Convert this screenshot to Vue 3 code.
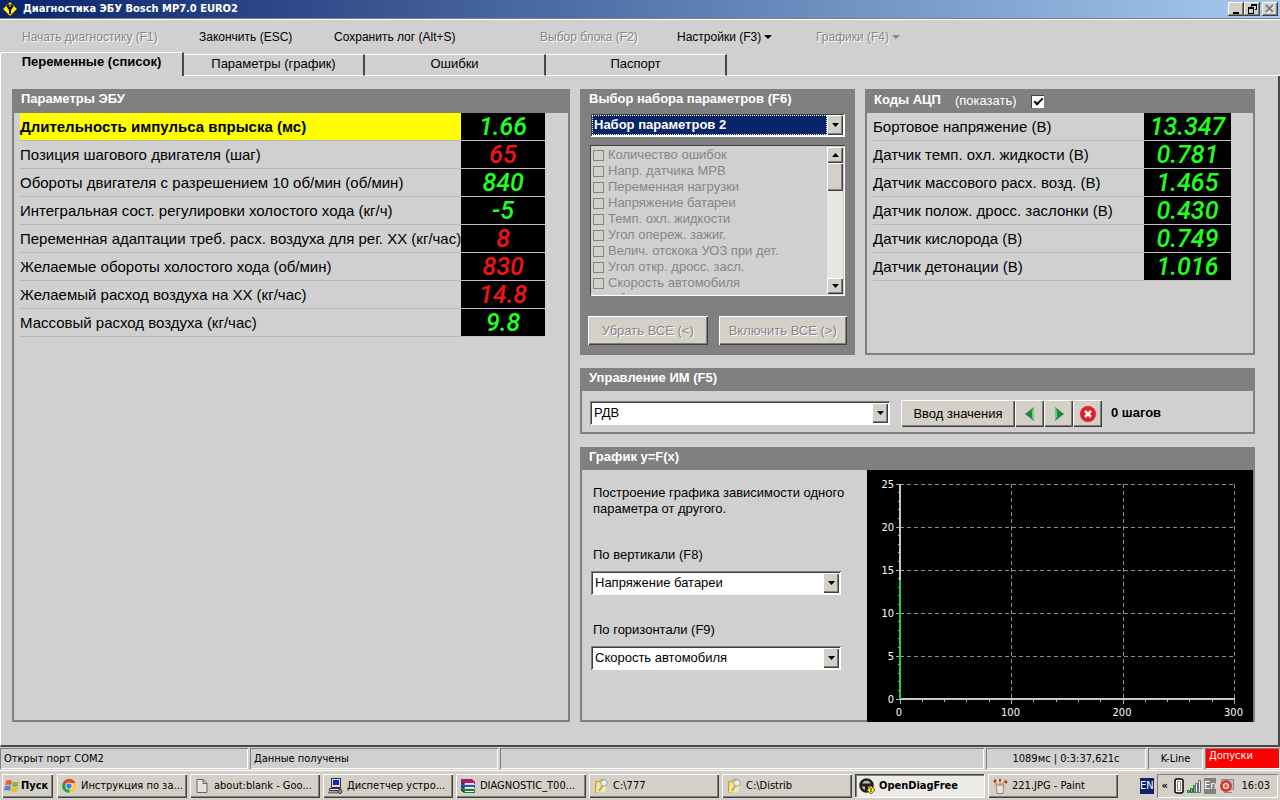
<script setup>
import { ref } from 'vue'

const menu = [
  { text: 'Начать диагностику (F1)', off: true },
  { text: 'Закончить (ESC)' },
  { text: 'Сохранить лог (Alt+S)' },
  { text: 'Выбор блока (F2)', off: true },
  { text: 'Настройки (F3)', arrow: true },
  { text: 'Графики (F4)', off: true, arrow: true },
]
const tabs = ['Переменные (список)', 'Параметры (график)', 'Ошибки', 'Паспорт']
const activeTab = ref(0)

const params = [
  ['Длительность импульса впрыска (мс)', '1.66', 'green'],
  ['Позиция шагового двигателя (шаг)', '65', 'red'],
  ['Обороты двигателя с разрешением 10 об/мин (об/мин)', '840', 'green'],
  ['Интегральная сост. регулировки холостого хода (кг/ч)', '-5', 'green'],
  ['Переменная адаптации треб. расх. воздуха для рег. ХХ (кг/час)', '8', 'red'],
  ['Желаемые обороты холостого хода (об/мин)', '830', 'red'],
  ['Желаемый расход воздуха на ХХ (кг/час)', '14.8', 'red'],
  ['Массовый расход воздуха (кг/час)', '9.8', 'green'],
]
const adc = [
  ['Бортовое напряжение (В)', '13.347'],
  ['Датчик темп. охл. жидкости (В)', '0.781'],
  ['Датчик массового расх. возд. (В)', '1.465'],
  ['Датчик полож. дросс. заслонки (В)', '0.430'],
  ['Датчик кислорода (В)', '0.749'],
  ['Датчик детонации (В)', '1.016'],
]
const options = [
  'Количество ошибок', 'Напр. датчика МРВ', 'Переменная нагрузки', 'Напряжение батареи',
  'Темп. охл. жидкости', 'Угол опереж. зажиг.', 'Велич. отскока УОЗ при дет.',
  'Угол откр. дросс. засл.', 'Скорость автомобиля', 'Обороты двигателя (0..Ob)',
]
const showAdc = ref(true)

const yTicks = [25, 20, 15, 10, 5, 0].map((v) => ({ v, y: 229 - v * 8.6 }))
const xTicks = [0, 100, 200, 300].map((v) => ({ v, x: 33 + v * 1.115 }))
const yMinor = Array.from({ length: 26 }, (_, i) => 229 - i * 8.6)
const xMinor = Array.from({ length: 16 }, (_, i) => 33 + i * 22.3)

const tasks = [
  { icon: 'chrome', text: 'Инструкция по за...' },
  { icon: 'page', text: 'about:blank - Goo...' },
  { icon: 'pc', text: 'Диспетчер устро...' },
  { icon: 'rar', text: 'DIAGNOSTIC_T00...' },
  { icon: 'folder', text: 'C:\\777' },
  { icon: 'folder', text: 'C:\\Distrib' },
  { icon: 'wheel', text: 'OpenDiagFree', active: true },
  { icon: 'paint', text: '221.JPG - Paint' },
]
</script>

<template>
  <div class="screen">
    <header class="title">
      <svg class="logo" width="16" height="16" viewBox="0 0 16 16">
        <path d="M8 0.5 15.5 8 8 15.5 0.5 8Z" fill="#ffee10" stroke="#111" />
        <path d="M5.500 3.500h5l1 2-2 3H9V13H7V8.500H6.500l-2-3z" fill="#111" />
        <path d="M7.500 4h1v2h-1z" fill="#ffee10" />
      </svg>
      <h1>Диагностика ЭБУ Bosch MP7.0 EURO2</h1>
      <div class="winbtns">
        <button class="wb" aria-label="Свернуть"><svg width="12" height="10"><path d="M2 9h6" stroke="#000" stroke-width="2" /></svg></button>
        <button class="wb" aria-label="Восстановить"><svg width="12" height="10" shape-rendering="crispEdges"><path d="M4 0h6v2H4zM4 2h1v1H4zM9 2h1v4H8V5h1zM1 3h6v2H1zM1 5h1v4h4V5h1v5H1z" fill="#000" /></svg></button>
        <button class="wb close" aria-label="Закрыть" disabled><svg width="12" height="10"><path d="M3 2l7 7M10 2l-7 7" stroke="#fff" stroke-width="2" /><path d="M2 1l7 7M9 1l-7 7" stroke="#808080" stroke-width="2" /></svg></button>
      </div>
    </header>

    <nav class="menu">
      <button v-for="m in menu" :key="m.text" :disabled="m.off">
        {{ m.text }}<svg v-if="m.arrow" width="8" height="4"><path d="M0 0h8L4 4z" fill="currentColor" /></svg>
      </button>
    </nav>

    <div class="tabs" role="tablist">
      <button v-for="(t, i) in tabs" :key="t" role="tab" :aria-selected="i === activeTab" :class="{ on: i === activeTab }" @click="activeTab = i">{{ t }}</button>
      <span class="rest"></span>
    </div>

    <main>
      <section class="panel left">
        <h2>Параметры ЭБУ</h2>
        <table>
          <tbody>
            <tr v-for="(p, i) in params" :key="p[0]" :class="{ sel: i === 0 }">
              <td>{{ p[0] }}</td>
              <td class="led" :class="p[2]">{{ p[1] }}</td>
            </tr>
          </tbody>
        </table>
      </section>

      <div class="right">
        <div class="top">
          <section class="panel setp">
            <h2><label for="set">Выбор набора параметров (F6)</label></h2>
            <div class="combo strong">
              <select id="set"><option>Набор параметров 2</option></select>
              <span class="arrow"><svg width="7" height="4"><path d="M0 0h7L3.500 4z" /></svg></span>
            </div>
            <div class="list">
              <div class="items">
                <label v-for="o in options" :key="o"><input type="checkbox" disabled />{{ o }}</label>
              </div>
              <div class="scroll">
                <button class="arrow" aria-label="Вверх"><svg width="7" height="4"><path d="M0 4h7L3.500 0z" /></svg></button>
                <span class="thumb"></span>
                <span class="track"></span>
                <button class="arrow" aria-label="Вниз"><svg width="7" height="4"><path d="M0 0h7L3.500 4z" /></svg></button>
              </div>
            </div>
            <div class="pair">
              <button class="btn" disabled>Убрать ВСЕ (&lt;)</button>
              <button class="btn wide" disabled>Включить ВСЕ (&gt;)</button>
            </div>
          </section>

          <section class="panel adc">
            <div class="head">
              <h2>Коды АЦП</h2>
              <label for="show">(показать)</label>
              <input id="show" v-model="showAdc" type="checkbox" />
            </div>
            <table v-if="showAdc">
              <tbody>
                <tr v-for="a in adc" :key="a[0]">
                  <td>{{ a[0] }}</td>
                  <td class="led green">{{ a[1] }}</td>
                </tr>
              </tbody>
            </table>
          </section>
        </div>

        <section class="panel ctl">
          <h2><label for="im">Управление ИМ (F5)</label></h2>
          <div class="row">
            <div class="combo">
              <select id="im"><option>РДВ</option></select>
              <span class="arrow"><svg width="7" height="4"><path d="M0 0h7L3.500 4z" /></svg></span>
            </div>
            <div class="group">
              <button class="btn enter"><span>Вво<u>д</u> значения</span></button>
              <button class="btn sq" aria-label="Меньше"><svg width="16" height="16"><path d="M12 1v14L3 8z" fill="#1f8a3a" /><path d="M12 1v14L10 12V4z" fill="#6fc987" /></svg></button>
              <button class="btn sq" aria-label="Больше"><svg width="16" height="16"><path d="M4 1v14l9-7z" fill="#1f8a3a" /><path d="M4 1v14l2-4V5z" fill="#6fc987" /></svg></button>
              <button class="btn sq" aria-label="Стоп"><svg width="16" height="16"><circle cx="8" cy="8" r="8" fill="#e81c28" /><path d="M5 5l6 6M11 5l-6 6" stroke="#fff" stroke-width="2.500" /></svg></button>
            </div>
            <b>0 шагов</b>
          </div>
        </section>

        <section class="panel graph">
          <h2>График y=F(x)</h2>
          <div class="gbody">
            <div class="form">
              <p>Построение графика зависимости одного параметра от другого.</p>
              <label for="vy">По вертикали (F8)</label>
              <div class="combo">
                <select id="vy"><option>Напряжение батареи</option></select>
                <span class="arrow"><svg width="7" height="4"><path d="M0 0h7L3.500 4z" /></svg></span>
              </div>
              <label for="vx">По горизонтали (F9)</label>
              <div class="combo">
                <select id="vx"><option>Скорость автомобиля</option></select>
                <span class="arrow"><svg width="7" height="4"><path d="M0 0h7L3.500 4z" /></svg></span>
              </div>
            </div>
            <svg class="chart" width="386" height="252" viewBox="0 0 386 252">
              <g stroke="#8c8c8c" stroke-dasharray="4 3" shape-rendering="crispEdges">
                <path v-for="t in yTicks.slice(0, 5)" :key="'h' + t.v" :d="`M33 ${t.y}H367`" />
                <path v-for="t in xTicks.slice(1)" :key="'v' + t.v" :d="`M${t.x} 14V229`" />
              </g>
              <g stroke="#b0b0b0" shape-rendering="crispEdges">
                <path v-for="y in yMinor" :key="'a' + y" :d="`M31 ${y}h2`" />
                <path v-for="x in xMinor" :key="'b' + x" :d="`M${x} 229v3`" />
                <path v-for="t in yTicks" :key="'c' + t.v" :d="`M29 ${t.y}h6`" />
                <path v-for="t in xTicks" :key="'d' + t.v" :d="`M${t.x} 227v7`" />
              </g>
              <path d="M33 14V229H367" fill="none" stroke="#c8c8c8" stroke-width="2" />
              <path d="M33 110V229" stroke="#20d048" stroke-width="2" />
              <g fill="#fff">
                <text v-for="t in yTicks" :key="'y' + t.v" x="27" :y="t.y + 4" text-anchor="end">{{ t.v }}</text>
                <text v-for="t in xTicks" :key="'x' + t.v" :x="t.x - 1" y="246" text-anchor="middle">{{ t.v }}</text>
              </g>
            </svg>
          </div>
        </section>
      </div>
    </main>

    <footer class="status">
      <span class="s1">Открыт порт COM2</span>
      <span class="s1">Данные получены</span>
      <span class="s3"></span>
      <span class="s4">1089мс | 0:3:37,621с</span>
      <span class="s5">K-Line</span>
      <span class="s6">Допуски</span>
    </footer>

    <div class="taskbar">
      <button class="task start">
        <svg width="17" height="16" viewBox="0 0 17 16"><path d="M2 3q3-2 6 0L7 7.500q-3-2-6 0z" fill="#e8602c" /><path d="M9 3.500q3 2 6 0l-1 4.500q-3 2-6 0z" fill="#7cb83c" /><path d="M1 8.500q3-2 6 0L6 13q-3-2-6 0z" fill="#4a86d8" /><path d="M8 9q3 2 6 0l-1 4.500q-3 2-6 0z" fill="#f4bc2c" /></svg>
        <b>Пуск</b>
      </button>
      <button v-for="t in tasks" :key="t.text" class="task" :class="{ active: t.active }">
        <svg width="16" height="16" viewBox="0 0 16 16">
          <template v-if="t.icon === 'chrome'">
            <circle cx="8" cy="8" r="7" fill="#fbc92e" />
            <path d="M8 8 2 4.500A7 7 0 0 1 14.500 5H8z" fill="#e0412f" />
            <path d="M8 8 2 4.500A7 7 0 0 0 7.500 15L10 10z" fill="#34a04c" />
            <circle cx="8" cy="8" r="3.500" fill="#fff" /><circle cx="8" cy="8" r="2.700" fill="#3c7de0" />
          </template>
          <path v-else-if="t.icon === 'page'" d="M3 1.500h6l4 4v9H3zM9 1.500v4h4" fill="#e4e2dc" stroke="#666" />
          <template v-else-if="t.icon === 'pc'">
            <path d="M4.500 .5h9v9h-9z" fill="#dcdcdc" stroke="#333" /><path d="M6 2h6v5H6z" fill="#1228d0" />
            <path d="M2.500 10.500h11v2h-11z" fill="#eee" stroke="#333" /><path d="M1 14.500h10" stroke="#777" stroke-width="2" /><circle cx="13" cy="13.500" r="2" fill="#999" stroke="#333" />
          </template>
          <template v-else-if="t.icon === 'rar'">
            <path d="M1 1h11l3 3v2H4L1 4z" fill="#b0186c" /><path d="M1 5h2l2 2h10v3H4L1 8z" fill="#2850c8" /><path d="M1 9h2l2 2h10v4H4l-3-3z" fill="#188038" />
            <path d="M5 5.500h9M5 9.500h9M5 13.500h9" stroke="#fff" /><path d="M1 4l3 2M1 8l3 2M1 12l3 2" stroke="#222" />
          </template>
          <template v-else-if="t.icon === 'folder'">
            <path d="M2.500 3.500h4l1-2h4v12l-9 1z" fill="#f5d66a" stroke="#c8a030" /><path d="M5 6h9l-2 8.500H3z" fill="#fbe89a" /><circle cx="11" cy="5" r="3.300" fill="#e4eef0" stroke="#98a0a0" /><path d="M9 8l-3 5" stroke="#a8a8a0" stroke-width="2" />
          </template>
          <template v-else-if="t.icon === 'wheel'">
            <circle cx="7.500" cy="7.500" r="6" fill="#bbb" stroke="#222" stroke-width="2.500" /><path d="M2 7h11M7.500 7v6" stroke="#222" stroke-width="3" />
            <path d="M12 8l4 4-4 4-4-4z" fill="#ffe818" stroke="#776a00" /><path d="M12 10v4" stroke="#222" />
          </template>
          <template v-else>
            <path d="M5 7l-3-5M8 7V1M10 7l4-5" stroke="#d89868" stroke-width="2" /><path d="M2 4l2-2M13 3l2 2M7 2h2" stroke="#b02820" stroke-width="2" /><path d="M4 7h8l-1 8.500H5z" fill="#e8e0dc" stroke="#a08078" />
          </template>
        </svg>
        <span>{{ t.text }}</span>
      </button>
      <span class="lang">EN</span>
      <div class="tray">
        <span class="chev">«</span>
        <svg width="10" height="16"><rect x="1" y="1" width="8" height="14" rx="2" fill="#fff" stroke="#000" stroke-width="1.500" /><path d="M3.500 3.500h3v9h-3z" fill="#fff" stroke="#888" /></svg>
        <svg width="14" height="14"><path d="M.5 11.500h2v2h-2zM3.500 9.500h2v4h-2zM6.500 6.500h2v7h-2z" fill="#5cc868" stroke="#287838" /><path d="M8.500 4.500h2v9h-2zM11.500 1.500h2v12h-2z" fill="#eee" stroke="#668" /></svg>
        <span class="en">En</span>
        <svg width="16" height="16"><path d="M2.500 1.500h12v10h-12zM5 14.500h8" fill="#a8c4e0" stroke="#889" /><circle cx="7" cy="8" r="6" fill="#e03828" /><circle cx="7" cy="8" r="3" fill="#fff" /><circle cx="7" cy="8" r="2" fill="#e87050" /></svg>
        <time>16:03</time>
      </div>
    </div>
  </div>
</template>

<style>
body {
  margin: 0;
  background: #d0d0d0;
}
</style>

<style scoped>
* {
  box-sizing: border-box;
}
.screen {
  display: flex;
  flex-direction: column;
  min-height: 100vh;
  background: #d0d0d0;
  color: #000;
  font: 13px/16px "Liberation Sans", Arial, sans-serif;
}
button,
select,
input {
  margin: 0;
  padding: 0;
  border: 0;
  border-radius: 0;
  color: inherit;
  font: inherit;
  appearance: none;
  background: none;
}
svg {
  flex: none;
}
h1,
h2,
p {
  margin: 0;
}
.title {
  display: flex;
  align-items: center;
  height: 19px;
  padding: 0 2px;
  border-bottom: 1px solid #808080;
  background: linear-gradient(90deg, #0a246a, #a6caf0);
  color: #fff;
}
h1 {
  flex: 1;
  margin-left: 5px;
  font: bold 11px/16px "DejaVu Sans Condensed", Tahoma, sans-serif;
}
.winbtns {
  display: flex;
}
.wb {
  width: 16px;
  height: 14px;
  background: #d4d0c8;
  box-shadow: inset -1px -1px #404040, inset 1px 1px #fff, inset -2px -2px #808080;
}
.wb svg {
  display: block;
  margin: 1px 3px;
}
.close {
  margin-left: 2px;
}
.close svg {
  margin: 1px 2px;
}
.menu {
  display: grid;
  grid-template-columns: 177px 135px 206px 137px 139px auto;
  align-items: center;
  height: 33px;
  padding: 2px 0 0 22px;
  border-top: 1px solid #fff;
}
.menu button {
  display: flex;
  align-items: center;
  gap: 3px;
  justify-self: start;
  font-size: 12px;
  white-space: nowrap;
}
.menu button:disabled {
  color: #868686;
  text-shadow: 1px 1px #fff;
}
.tabs {
  display: flex;
  align-items: flex-end;
  height: 24px;
}
.tabs button {
  width: 181px;
  height: 22px;
  padding-bottom: 2px;
  border-top: 1px solid #fff;
  border-right: 2px solid #484848;
  border-bottom: 1px solid #fff;
}
.tabs .on {
  width: 184px;
  height: 24px;
  padding-bottom: 6px;
  border-bottom: 0;
  border-left: 1px solid #fff;
  border-radius: 3px 0 0 0;
  font-weight: bold;
}
.rest {
  flex: 1;
  border-bottom: 1px solid #fff;
}
main {
  display: flex;
  flex: 1;
  gap: 10px;
  padding: 13px 23px 23px 11px;
  border-left: 1px solid #fff;
  border-right: 2px solid #484848;
  border-bottom: 2px solid #484848;
}
.panel {
  display: flex;
  flex-direction: column;
  border: 2px solid #808080;
  border-top: 0;
}
.panel h2 {
  height: 23px;
  padding: 2px 7px;
  background: #808080;
  color: #fff;
  font: bold 13px/16px "Liberation Sans", Arial, sans-serif;
}
.left {
  flex: 554 0 0;
}
.left h2 {
  height: 24px;
}
.right {
  display: flex;
  flex: 675 0 0;
  flex-direction: column;
  gap: 13px;
}
.top {
  display: flex;
  gap: 10px;
  height: 266px;
}
table {
  border-spacing: 0;
  font-size: 15px;
  margin: 0 6px;
}
.left table {
  margin-right: 23px;
}
.adc table {
  margin-right: 22px;
}
td {
  height: 28px;
  padding: 0;
  border-bottom: 1px solid #b8b8b8;
  white-space: nowrap;
}
.led {
  width: 87px;
  background: #000;
  border-bottom-color: #c0c0c0;
  font: italic 500 25px/27px Roboto, "Liberation Sans", sans-serif;
  text-align: center;
}
.left .led {
  width: 84px;
}
.green {
  color: #20ff20;
}
.red {
  color: #f01414;
}
.sel td:first-child {
  background: #ff0;
  font-weight: bold;
}
.setp {
  flex: 271 0 0;
  background: #808080;
}
.combo {
  display: flex;
  height: 24px;
  padding: 2px;
  background: #fff;
  box-shadow: inset 1px 1px #808080, inset -1px -1px #fff, inset 2px 2px #404040;
}
.combo select {
  flex: 1;
  min-width: 0;
  padding: 0 2px;
}
.combo .arrow {
  height: 20px;
}
.arrow {
  display: flex;
  flex: none;
  align-items: center;
  justify-content: center;
  width: 16px;
  height: 16px;
  background: #d4d0c8;
  box-shadow: inset 1px 1px #fff, inset -1px -1px #404040, inset -2px -2px #808080;
}
.setp .combo {
  margin: 1px 8px 8px;
}
.strong select {
  outline: 1px dotted #fff;
  outline-offset: -1px;
  background: #0a246a;
  color: #fff;
  font-weight: bold;
}
.list {
  display: flex;
  height: 151px;
  margin: 0 8px 20px;
  padding: 2px;
  background: #d0d0d0;
  box-shadow: inset 1px 1px #404040, inset -1px -1px #fff;
}
.items {
  flex: 1;
  overflow: hidden;
  color: #868686;
}
.items label {
  display: flex;
  align-items: center;
  gap: 4px;
  height: 16px;
  padding-left: 1px;
}
.items input {
  width: 11px;
  height: 11px;
  border: 1px solid #868686;
  background: #d4d0c8;
}
.scroll {
  display: flex;
  flex-direction: column;
}
.thumb {
  height: 28px;
  background: #d4d0c8;
  box-shadow: inset 1px 1px #fff, inset -1px -1px #404040, inset -2px -2px #808080;
}
.track {
  flex: 1;
  background: #e8e6e2;
}
.pair {
  display: flex;
  gap: 11px;
  margin: 0 6px;
}
.btn {
  display: flex;
  align-items: center;
  justify-content: center;
  height: 29px;
  background: #d4d0c8;
  box-shadow: inset 1px 1px #fff, inset -1px -1px #404040, inset -2px -2px #808080;
  white-space: nowrap;
}
.pair .btn {
  flex: 120 0 0;
}
.pair .wide {
  flex: 129 0 0;
}
.btn:disabled {
  color: #868686;
  text-shadow: 1px 1px #fff;
}
.adc {
  flex: 386 0 0;
}
.head {
  display: flex;
  align-items: center;
  height: 24px;
  background: #808080;
  color: #fff;
}
.head label {
  margin: 0 14px 0 7px;
}
.head input {
  width: 13px;
  height: 13px;
  background: #fff;
  box-shadow: inset 1px 1px #404040;
}
.head input:checked::after {
  display: block;
  width: 7px;
  height: 3px;
  margin: 3px;
  border: solid #000;
  border-width: 0 0 2px 2px;
  content: "";
  transform: rotate(-45deg);
}
.row {
  display: flex;
  align-items: center;
  height: 41px;
  padding: 2px 8px 0;
}
.row .combo {
  flex: 0 1 300px;
}
.group {
  display: flex;
  margin: 2px 9px 0 11px;
}
.btn.enter {
  width: 114px;
  height: 27px;
}
.btn.sq {
  width: 29px;
  height: 27px;
}
.graph {
  flex: 1;
}
.gbody {
  display: flex;
  flex: 1;
}
.form {
  display: flex;
  flex: 1;
  flex-direction: column;
  padding: 15px 8px 0 9px;
}
.form p {
  padding-left: 2px;
  margin-bottom: 30px;
}
.form label {
  padding-left: 2px;
  margin-bottom: 8px;
}
.form .combo {
  margin: 0 18px 27px 0;
}
.chart {
  display: block;
  margin-bottom: -2px;
  background: #000;
  font: 11px "DejaVu Sans Condensed", sans-serif;
}
.status {
  display: flex;
  gap: 2px;
  height: 24px;
  padding: 1px 0;
  font: 11px/22px "DejaVu Sans Condensed", Tahoma, sans-serif;
  border-bottom: 1px solid #fff;
}
.status span {
  padding-left: 4px;
  box-shadow: inset 1px 1px #808080, inset -1px -1px #fff;
  white-space: nowrap;
}
.status .s1 {
  flex: 0 1 248px;
}
.status .s3 {
  flex: 1;
}
.status .s4 {
  width: 160px;
  padding: 0;
  text-align: center;
}
.status .s5 {
  width: 55px;
  padding: 0;
  text-align: center;
}
.status .s6 {
  width: 75px;
  background: #f00;
  color: #fff;
  line-height: 16px;
}
.taskbar {
  display: flex;
  align-items: center;
  gap: 3px;
  height: 29px;
  padding: 0 2px;
  background: #d4d0c8;
  font: 11px/16px "DejaVu Sans Condensed", Tahoma, sans-serif;
}
.task {
  display: flex;
  flex: 0 1 130px;
  align-items: center;
  gap: 4px;
  min-width: 0;
  height: 24px;
  padding-left: 4px;
  box-shadow: inset 1px 1px #fff, inset -1px -1px #404040, inset -2px -2px #808080;
  white-space: nowrap;
}
.start {
  flex: 0 0 51px;
  gap: 0;
  padding-left: 2px;
  margin-right: 1px;
}
.active {
  background: #ecebe7;
  box-shadow: inset -1px -1px #fff, inset 1px 1px #404040, inset 2px 2px #808080;
  font-weight: bold;
}
.lang {
  margin-left: auto;
  background: #0a246a;
  color: #fff;
}
.tray {
  display: flex;
  align-items: center;
  gap: 3px;
  height: 24px;
  padding: 0 8px 0 5px;
  box-shadow: inset 1px 1px #808080, inset -1px -1px #fff;
  white-space: nowrap;
}
.chev {
  margin-right: 3px;
  font-weight: bold;
}
.en {
  background: #808080;
  color: #fff;
}
.tray time {
  margin-left: 3px;
}
</style>
